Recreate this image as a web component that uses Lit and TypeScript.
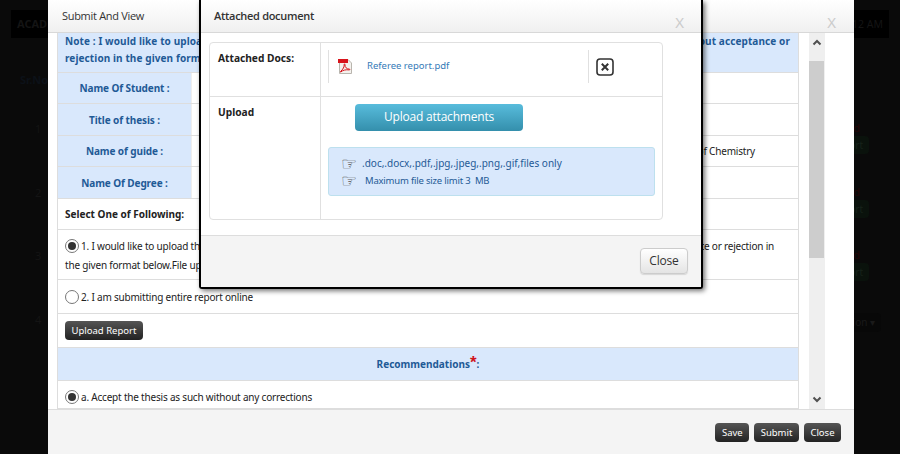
import { LitElement, html, css } from "lit";
import { customElement } from "lit/decorators.js";

const pdf = html`<svg class="pdf" width="16" height="17" viewBox="0 0 16 17">
  <path d="M2.5 1.5H11L14.5 5V15.5H2.5Z" fill="#f4f2ee" stroke="#b9b5ae"/>
  <path d="M1 1H11V5H1Z" fill="#d8141c"/>
  <path d="M3.5 13.5C6 11.5 7.5 8.5 7.2 6.5C7 5.6 8.2 5.6 8 7C7.8 9 9.5 11 12.5 11.2C13.5 11.4 13 12 12 11.9C9 11.5 6 12 3.8 14C3.3 14.3 3.2 13.8 3.5 13.5Z" fill="none" stroke="#d8141c" stroke-width="1"/>
</svg>`;

const boxX = html`<svg width="18" height="18" viewBox="0 0 18 18">
  <rect x="1" y="1" width="16" height="16" rx="3" fill="#fff" stroke="#333" stroke-width="1.6"/>
  <path d="M5.8 5.8L12.2 12.2M12.2 5.8L5.8 12.2" stroke="#333" stroke-width="2"/>
</svg>`;

const up = html`<svg width="10" height="7" viewBox="0 0 10 7"><path d="M1.5 5.5L5 2L8.5 5.5" fill="none" stroke="#505050" stroke-width="2"/></svg>`;
const down = html`<svg width="10" height="7" viewBox="0 0 10 7"><path d="M1.5 1.5L5 5L8.5 1.5" fill="none" stroke="#505050" stroke-width="2"/></svg>`;

@customElement("app-root")
export class AppRoot extends LitElement {
  static styles = css`
    :host { display: block; position: relative; width: 900px; height: 454px; overflow: hidden; background: #0a0a0a; font-family: "Noto Sans", sans-serif; font-size: 10px; color: #222; }
    .bg { display: flex; flex-direction: column; height: 454px; padding: 10px 11px 0; box-sizing: border-box; color: #141414; }
    .bg-top { display: flex; justify-content: space-between; }
    .bg-block { height: 28px; background: #000; line-height: 28px; padding: 0 6px; font-weight: bold; font-size: 11px; color: #141414; width: 110px; box-sizing: border-box; }
    .bg-block.r { text-align: right; font-weight: normal; font-size: 10.5px; }
    .bg-head { height: 59px; padding: 24px 0 0 9px; box-sizing: border-box; display: flex; align-items: center; font-weight: bold; font-size: 11px; color: #0c1118; }
    .bg-row { display: flex; justify-content: space-between; align-items: center; height: 63.5px; padding-left: 24px; font-size: 11px; }
    .stack { align-self: flex-start; padding-top: 25px; display: flex; flex-direction: column; align-items: flex-end; }
    .done { color: #240505; line-height: 12px; margin: 0 29px 2px 0; font-size: 11px; }
    .bg-btn { height: 18px; line-height: 18px; background: #0a120c; border-radius: 4px; padding: 0 6px; color: #16221a; margin-right: 20px; font-size: 10px; }
    .bg-btn.menu { height: 19px; background: #080808; color: #1a1a1a; margin-right: 8px; }

    .modal-a { position: absolute; left: 48px; top: 0; width: 806px; height: 454px; background: #fff; display: flex; flex-direction: column; }
    .head-a { height: 32px; flex: none; background: linear-gradient(#fff, #f0f0f0); border-bottom: 1px solid #d8d8d8; display: flex; justify-content: space-between; font-family: "Open Sans", sans-serif; font-size: 11px; letter-spacing: -0.3px; color: #333; }
    .title { line-height: 32px; padding-left: 14px; }
    .x { font-family: "Noto Sans", sans-serif; font-size: 15px; letter-spacing: 0; color: #ccc; padding: 14px 18px 0 0; line-height: 17px; }
    .scroll { height: 376px; flex: none; display: flex; border-bottom: 1px solid #ddd; overflow: hidden; padding-left: 9px; }
    table { width: 742px; border-collapse: collapse; table-layout: fixed; flex: none; border-left: 1px solid #ddd; border-right: 1px solid #ddd; letter-spacing: -0.2px; }
    .c1 { width: 134px; }
    td { border-bottom: 1px solid #ddd; padding: 0 7px; box-sizing: border-box; white-space: nowrap; overflow: hidden; }
    .h28 { height: 28px; } .h31 { height: 31px; } .h32 { height: 32px; } .h33 { height: 33px; } .h34 { height: 34px; } .h50 { height: 50px; }
    .lbl { background: #d9e8fc; color: #1f5a96; font-weight: bold; letter-spacing: -0.1px; text-align: center; border-right: 1px solid #eee; }
    .val { text-align: right; padding-right: 43px; }
    .note { background: #d9e8fc; color: #1f5a96; font-weight: bold; letter-spacing: 0.1px; line-height: 17px; height: 39px; padding-bottom: 5px; }
    .split { display: flex; justify-content: space-between; }
    .note .split { padding-right: 1px; }
    .strong { font-weight: bold; letter-spacing: 0; }
    .ln { line-height: 19px; }
    .pad { padding-right: 24px; padding-top: 2px; }
    .opt { display: flex; align-items: center; gap: 2px; }
    .low { padding-top: 5px; }
    .radio { width: 14px; height: 14px; border-radius: 50%; border: 1px solid #777; box-sizing: border-box; background: #fff; flex: none; display: flex; align-items: center; justify-content: center; }
    .radio.on::after { content: ""; width: 8px; height: 8px; border-radius: 50%; background: #333; }
    .dark { display: inline-block; background: linear-gradient(#555, #222); color: #fff; border-radius: 4px; font-size: 9.5px; line-height: 19px; padding: 0 6.5px; border: 0; font-family: inherit; }
    .rec { background: #d9e8fc; color: #1f5a96; font-weight: bold; letter-spacing: 0; text-align: center; }
    .rec b { color: #d0141c; font-family: "Liberation Sans", sans-serif; font-size: 17px; line-height: 10px; font-weight: bold; }
    .sb { margin-left: 10px; width: 16px; background: #efefef; display: flex; flex-direction: column; align-items: center; justify-content: space-between; position: relative; padding: 6px 0; box-sizing: border-box; }
    .thumb { position: absolute; top: 28px; left: 0; width: 15px; height: 197px; background: #cdcdcd; }
    .foot-a { flex: 1; background: #f4f4f4; display: flex; justify-content: flex-end; align-items: center; gap: 5px; padding-right: 13px; padding-top: 1px; }

    .modal-b { position: absolute; left: 199px; top: 0; width: 504px; height: 289px; box-sizing: border-box; background: #fff; border: solid #000; border-width: 0 2px 2px 2px; border-radius: 0 0 3px 3px; box-shadow: 2px 2px 5px rgba(0,0,0,.55); display: flex; flex-direction: column; }
    .head-b { font-weight: 600; }
    .head-b .title { color: #333; padding-left: 13px; }
    .head-b .x { padding-right: 17px; font-weight: 400; }
    .body-b { flex: 1; padding: 9px 38px 0 8px; }
    .card { height: 178px; border: 1px solid #e0e0e0; border-radius: 4px; display: grid; grid-template-columns: 111px 1fr; grid-template-rows: 54px 1fr; box-sizing: border-box; }
    .cell-l { border-right: 1px solid #e0e0e0; font-weight: bold; padding: 8px 8px; font-size: 10.2px; }
    .cell-r { padding: 7px; }
    .row1 { border-bottom: 1px solid #e0e0e0; }
    .docs { flex: 1; display: flex; align-items: center; height: 33px; border-left: 1px solid #e0e0e0; padding-left: 8px; }
    .pdf { flex: none; margin-right: 14px; }
    .link { color: #357ab7; flex: 1; font-size: 9.5px; line-height: 31px; height: 33px; }
    .docs-x { display: flex; align-items: center; height: 33px; border-left: 1px solid #e0e0e0; padding-left: 7px; width: 67px; box-sizing: border-box; }
    .up2 { display: flex; flex-direction: column; }
    .upbtn { margin-left: 27px; width: 168px; height: 27px; border-radius: 4px; background: linear-gradient(#58bcdc, #348fac); color: #fff; font-family: "Open Sans", sans-serif; font-size: 12px; letter-spacing: -0.2px; line-height: 25px; text-align: center; }
    .info { margin-top: 16px; width: 327px; height: 49px; box-sizing: border-box; background: #d9e8fc; border: 1px solid #bde0ee; border-radius: 3px; padding: 7px 12px; color: #1f5a96; font-size: 10px; line-height: 17px; }
    .info div { display: flex; }
    .hand { font-family: "DejaVu Sans", sans-serif; font-size: 18px; color: #555; width: 21px; flex: none; line-height: 17px; }
    .lim { font-size: 9.5px; letter-spacing: -0.2px; margin-left: 3px; }
    .foot-b { height: 52px; flex: none; background: #f4f4f4; border-top: 1px solid #ddd; display: flex; justify-content: flex-end; align-items: center; padding: 0 13px 2px 0; box-sizing: border-box; }
    .light { width: 48px; height: 26px; box-sizing: border-box; border: 1px solid #ccc; border-radius: 4px; background: linear-gradient(#fff, #e4e4e4); font-family: "Open Sans", sans-serif; font-size: 12px; letter-spacing: -0.2px; line-height: 24px; color: #333; text-align: center; box-shadow: 0 1px 1px rgba(0,0,0,.12); }
  `;

  render() {
    return html`
      <div class="bg">
        <div class="bg-top"><div class="bg-block">ACADEMIC</div><div class="bg-block r">12 AM</div></div>
        <div class="bg-head"><span>Sr.No</span></div>
        <div class="bg-row"><span>1</span><div class="stack"><span class="done">Submitted</span><span class="bg-btn">Report</span></div></div>
        <div class="bg-row"><span>2</span><div class="stack"><span class="done">Submitted</span><span class="bg-btn">Report</span></div></div>
        <div class="bg-row"><span>3</span><div class="stack"><span class="done">Submitted</span><span class="bg-btn">Report</span></div></div>
        <div class="bg-row"><span>4</span><div class="stack"><span class="bg-btn menu">Action ▾</span></div></div>
      </div>

      <div class="modal-a">
        <div class="head-a"><span class="title">Submit And View</span><span class="x">X</span></div>
        <div class="scroll">
          <table>
            <colgroup><col class="c1" /><col /></colgroup>
            <tr><td class="note" colspan="2">
              <div class="split"><span>Note : I would like to upload the report</span><span>without acceptance or</span></div>
              <div>rejection in the given format below</div>
            </td></tr>
            <tr class="h31"><td class="lbl">Name Of Student :</td><td class="val"></td></tr>
            <tr class="h32"><td class="lbl">Title of thesis :</td><td class="val"></td></tr>
            <tr class="h31"><td class="lbl">Name of guide :</td><td class="val">Department of Chemistry</td></tr>
            <tr class="h32"><td class="lbl">Name Of Degree :</td><td class="val"></td></tr>
            <tr class="h31"><td class="strong" colspan="2">Select One of Following:</td></tr>
            <tr class="h50"><td colspan="2" class="pad">
              <div class="split ln"><span class="opt"><span class="radio on"></span>1. I would like to upload the report</span><span>acceptance or rejection in</span></div>
              <div class="ln">the given format below.File upload</div>
            </td></tr>
            <tr class="h34"><td colspan="2"><span class="opt"><span class="radio"></span>2. I am submitting entire report online</span></td></tr>
            <tr class="h34"><td colspan="2"><button class="dark">Upload Report</button></td></tr>
            <tr class="h33"><td class="rec" colspan="2">Recommendations<b>*</b>:</td></tr>
            <tr class="h28"><td colspan="2" class="low"><span class="opt"><span class="radio on"></span>a. Accept the thesis as such without any corrections</span></td></tr>
          </table>
          <div class="sb">${up}<div class="thumb"></div>${down}</div>
        </div>
        <div class="foot-a">
          <button class="dark">Save</button><button class="dark">Submit</button><button class="dark">Close</button>
        </div>
      </div>

      <div class="modal-b">
        <div class="head-a head-b"><span class="title">Attached document</span><span class="x">X</span></div>
        <div class="body-b">
          <div class="card">
            <div class="cell-l row1">Attached Docs:</div>
            <div class="cell-r row1 split">
              <div class="docs">${pdf}<span class="link">Referee report.pdf</span></div>
              <div class="docs-x">${boxX}</div>
            </div>
            <div class="cell-l">Upload</div>
            <div class="cell-r up2">
              <div class="upbtn">Upload attachments</div>
              <div class="info">
                <div><span class="hand">☞</span><span>.doc,.docx,.pdf,.jpg,.jpeg,.png,.gif,files only</span></div>
                <div><span class="hand">☞</span><span class="lim">Maximum file size limit 3 &nbsp;MB</span></div>
              </div>
            </div>
          </div>
        </div>
        <div class="foot-b"><div class="light">Close</div></div>
      </div>
    `;
  }
}
